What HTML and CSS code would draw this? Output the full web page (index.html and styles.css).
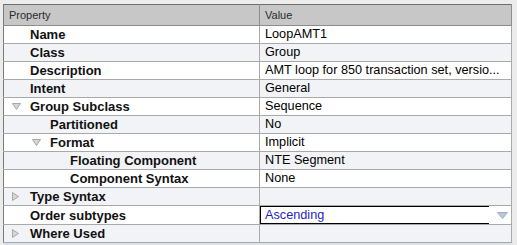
FILE: index.html
```html
<!DOCTYPE html>
<html lang="en">
  <head>
    <meta charset="UTF-8" />
    <title>Properties</title>
    <link rel="stylesheet" href="styles.css">
  </head>
  <body>
    <div class="panel">
      <table class="props">
        <thead>
          <tr>
            <th class="col-prop">Property</th>
            <th class="col-val">Value</th>
          </tr>
        </thead>
        <tbody>
          <tr>
            <td class="lvl1">Name</td>
            <td>LoopAMT1</td>
          </tr>
          <tr>
            <td class="lvl1">Class</td>
            <td>Group</td>
          </tr>
          <tr>
            <td class="lvl1">Description</td>
            <td>AMT loop for 850 transaction set, versio...</td>
          </tr>
          <tr>
            <td class="lvl1">Intent</td>
            <td>General</td>
          </tr>
          <tr>
            <td class="lvl1"><span class="tw open"><svg width="9" height="7" viewBox="0 0 9 7"><path d="M0.5 0.5 H8.5 L4.5 6.5 Z" fill="#d6d6d6" stroke="#a8a8a8"/></svg></span>Group Subclass</td>
            <td>Sequence</td>
          </tr>
          <tr>
            <td class="lvl2">Partitioned</td>
            <td>No</td>
          </tr>
          <tr>
            <td class="lvl2"><span class="tw open"><svg width="9" height="7" viewBox="0 0 9 7"><path d="M0.5 0.5 H8.5 L4.5 6.5 Z" fill="#d6d6d6" stroke="#a8a8a8"/></svg></span>Format</td>
            <td>Implicit</td>
          </tr>
          <tr>
            <td class="lvl3">Floating Component</td>
            <td>NTE Segment</td>
          </tr>
          <tr>
            <td class="lvl3">Component Syntax</td>
            <td>None</td>
          </tr>
          <tr>
            <td class="lvl1"><span class="tw"><svg width="7" height="9" viewBox="0 0 7 9"><path d="M0.5 0.5 V8.5 L6.5 4.5 Z" fill="#d6d6d6" stroke="#a8a8a8"/></svg></span>Type Syntax</td>
            <td></td>
          </tr>
          <tr>
            <td class="lvl1">Order subtypes</td>
            <td class="edit">
              <div class="combo">
                <span class="combo-text">Ascending</span>
                <svg class="combo-arrow" width="11" height="7" viewBox="0 0 11 7"><path d="M0.5 0.5 H10.5 L5.5 6.5 Z" fill="#b9c6d8" stroke="#9fb0c8"/></svg>
              </div>
            </td>
          </tr>
          <tr>
            <td class="lvl1"><span class="tw"><svg width="7" height="9" viewBox="0 0 7 9"><path d="M0.5 0.5 V8.5 L6.5 4.5 Z" fill="#d6d6d6" stroke="#a8a8a8"/></svg></span>Where Used</td>
            <td></td>
          </tr>
        </tbody>
      </table>
      <div class="footer"></div>
    </div>
  </body>
</html>
```

FILE: styles.css
```css
body {
  margin: 0;
  background-color: #ececec;
  font-family: "Liberation Sans", Arial, sans-serif;
  color: #000;
}

.panel {
  padding: 4px 5px 0 3px;
  height: 241px;
  overflow: hidden;
}

.props {
  width: 509px;
  border-collapse: collapse;
  table-layout: fixed;
  background-color: #fff;
  border-left: 1px solid #7a7a7a;
}

.props th {
  height: 21px;
  padding: 0 0 0 5px;
  background-color: #c7c7c7;
  border-top: 1px solid #6e6e6e;
  border-bottom: 1px solid #8c8c8c;
  border-right: 1px solid #8c8c8c;
  font-size: 11px;
  font-weight: normal;
  text-align: left;
  color: #2a2a2a;
  box-sizing: border-box;
}

.col-prop {
  width: 256px;
}

.props td {
  height: 18px;
  padding: 0 0 0 5px;
  border-bottom: 1px solid #a9a9a9;
  border-right: 1px solid #a9a9a9;
  font-size: 12.7px;
  white-space: nowrap;
  overflow: hidden;
  box-sizing: border-box;
  line-height: 17px;
}

.props tbody tr:nth-child(even) td {
  background-color: #f1f3f6;
}

.props td.lvl1,
.props td.lvl2,
.props td.lvl3 {
  font-weight: bold;
  font-size: 13px;
  color: #111;
}

.props td.lvl1 {
  padding-left: 26px;
}

.props td.lvl2 {
  padding-left: 46px;
}

.props td.lvl3 {
  padding-left: 66px;
}

.tw {
  display: inline-block;
  width: 18px;
  margin-left: -18px;
  vertical-align: middle;
  line-height: 0;
  position: relative;
  top: -1px;
}

.props td.edit {
  padding: 0;
}

.props tbody tr:nth-child(11) td.edit {
  background-color: #fff;
}

.combo {
  display: flex;
  align-items: center;
  justify-content: space-between;
  height: 18px;
}

.combo-text {
  flex: 1;
  height: 16px;
  line-height: 16px;
  padding-left: 4px;
  color: #1f1fc4;
  border-top: 1px solid #000;
  border-bottom: 1px solid #000;
  border-left: 1px solid #000;
  margin-right: 8px;
}

.combo-arrow {
  margin-right: 3px;
}

.footer {
  height: 4px;
  background-color: #dde2ea;
  width: 510px;
}
```
